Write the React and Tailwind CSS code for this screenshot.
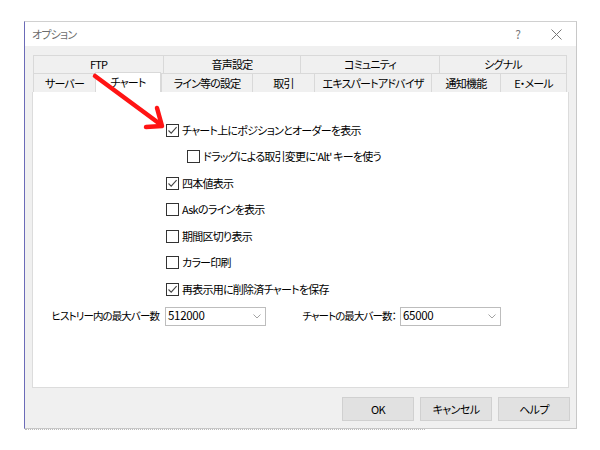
import React from "react";

const font = {
  fontFamily: '"Noto Sans CJK JP", "Noto Sans", sans-serif',
};

function CheckBox({ checked, label, indent }) {
  return (
    <div className={`flex h-[26.5px] items-center ${indent ? "pl-[154px]" : "pl-[133px]"}`}>
      <div className="flex h-[13px] w-[13px] shrink-0 items-center justify-center border border-[#333] bg-white">
        {checked && (
          <svg width="11" height="11" viewBox="0 0 11 11">
            <path d="M1.5 5.5 L4.2 8.2 L9.6 2.2" fill="none" stroke="#444" strokeWidth="1.1" />
          </svg>
        )}
      </div>
      <span className="ml-[3px] whitespace-nowrap text-[11px] leading-none tracking-[-0.75px] text-black">{label}</span>
    </div>
  );
}

function Select({ value, width }) {
  return (
    <div className={`flex h-[19px] shrink-0 items-center justify-between border border-[#bdbdbd] bg-white pl-[2px] pr-[4px] ${width}`}>
      <span className="text-[11.5px] leading-none tracking-[-0.3px] text-black">{value}</span>
      <svg width="8" height="5" viewBox="0 0 8 5">
        <path d="M0.5 0.5 L4 4 L7.5 0.5" fill="none" stroke="#999" strokeWidth="0.9" />
      </svg>
    </div>
  );
}

function Tab({ label, w, selected, top }) {
  if (selected) {
    return (
      <div className={`-mt-[1px] flex h-[20px] items-center justify-center whitespace-nowrap border-x border-t border-[#d9d9d9] bg-white ${w}`}>
        {label}
      </div>
    );
  }
  return (
    <div className={`flex ${top ? "h-[18px]" : "h-[19px]"} items-center justify-center whitespace-nowrap border-l border-t border-[#d9d9d9] bg-[#f0f0f0] last:border-r ${w}`}>
      {label}
    </div>
  );
}

function Button({ children }) {
  return (
    <div className="flex h-[24px] w-[72px] items-center justify-center border border-[#d0d0d0] bg-[#e1e1e1] text-[11px] tracking-[-0.6px] text-black">
      {children}
    </div>
  );
}

export default function App() {
  return (
    <div className="relative h-[450px] w-[600px] overflow-hidden bg-white [font-feature-settings:'palt']" style={font}>
      <div className="h-[21px]" />
      <div className="ml-[24px] flex h-[408px] w-[553px] flex-col border-b border-l border-r border-t border-b-[#c8c8c8] border-l-[#6b6bb8] border-r-[#c8c8c8] border-t-[#d0d0d0]">
        {/* title bar */}
        <div className="flex h-[24px] items-center bg-white pl-[7px] pr-[14px]">
          <span className="text-[11px] tracking-[-0.8px] text-[#6d6d6d]">オプション</span>
          <span className="ml-auto text-[12px] text-[#777]">?</span>
          <svg className="ml-[30px]" width="11" height="11" viewBox="0 0 11 11">
            <path d="M0.5 0.5 L10.5 10.5 M10.5 0.5 L0.5 10.5" stroke="#777" strokeWidth="1" />
          </svg>
        </div>
        {/* body */}
        <div className="flex flex-1 flex-col bg-[#f0f0f0] pl-[7px] pt-[9px]">
          <div className="ml-[1px] flex flex-col text-[11px] tracking-[-0.8px] text-black">
            <div className="flex">
              <Tab top label="FTP" w="w-[130px]" />
              <Tab top label="音声設定" w="w-[137px]" />
              <Tab top label="コミュニティ" w="w-[139px]" />
              <Tab top label="シグナル" w="w-[128px]" />
            </div>
            <div className="flex items-end">
              <Tab label="サーバー" w="w-[62px]" />
              <Tab selected label="チャート" w="w-[66px]" />
              <Tab label="ライン等の設定" w="w-[91px]" />
              <Tab label="取引" w="w-[62px]" />
              <Tab label="エキスパートアドバイザ" w="w-[117px]" />
              <Tab label="通知機能" w="w-[69px]" />
              <Tab label="E・メール" w="w-[67px]" />
            </div>
          </div>
          {/* panel */}
          <div className="h-[296px] w-[537px] border border-t-0 border-[#dcdcdc] bg-white">
            <div className="pt-[25px]">
              <CheckBox checked label="チャート上にポジションとオーダーを表示" />
              <CheckBox indent label="ドラッグによる取引変更に'Alt' キーを使う" />
              <CheckBox checked label="四本値表示" />
              <CheckBox label="Askのラインを表示" />
              <CheckBox label="期間区切り表示" />
              <CheckBox label="カラー印刷" />
              <CheckBox checked label="再表示用に削除済チャートを保存" />
            </div>
            <div className="mt-[4px] flex items-center text-[10.5px] tracking-[-0.9px] text-black">
              <div className="flex w-[132px] justify-end pr-[6px]">
                <span className="whitespace-nowrap">ヒストリー内の最大バー数</span>
              </div>
              <Select value="512000" width="w-[101px]" />
              <div className="flex w-[134px] justify-end pr-[4px]">
                <span className="whitespace-nowrap">チャートの最大バー数：</span>
              </div>
              <Select value="65000" width="w-[101px]" />
            </div>
          </div>
          {/* buttons */}
          <div className="mt-[9px] flex justify-end gap-[6px] pr-[6px]">
            <Button>OK</Button>
            <Button>キャンセル</Button>
            <Button>ヘルプ</Button>
          </div>
        </div>
      </div>
      <div className="ml-[25px] h-[1px] w-[400px] border-t border-dotted border-[#bbb]" />

      {/* red arrow annotation */}
      <svg className="absolute left-0 top-0" width="600" height="450" viewBox="0 0 600 450">
        <g stroke="#ff1414" strokeWidth="4.5" strokeLinecap="round" fill="none">
          <path d="M95 76 L160 124" />
          <path d="M157 108 L162 126 L146 127" strokeLinejoin="round" />
        </g>
      </svg>
    </div>
  );
}
